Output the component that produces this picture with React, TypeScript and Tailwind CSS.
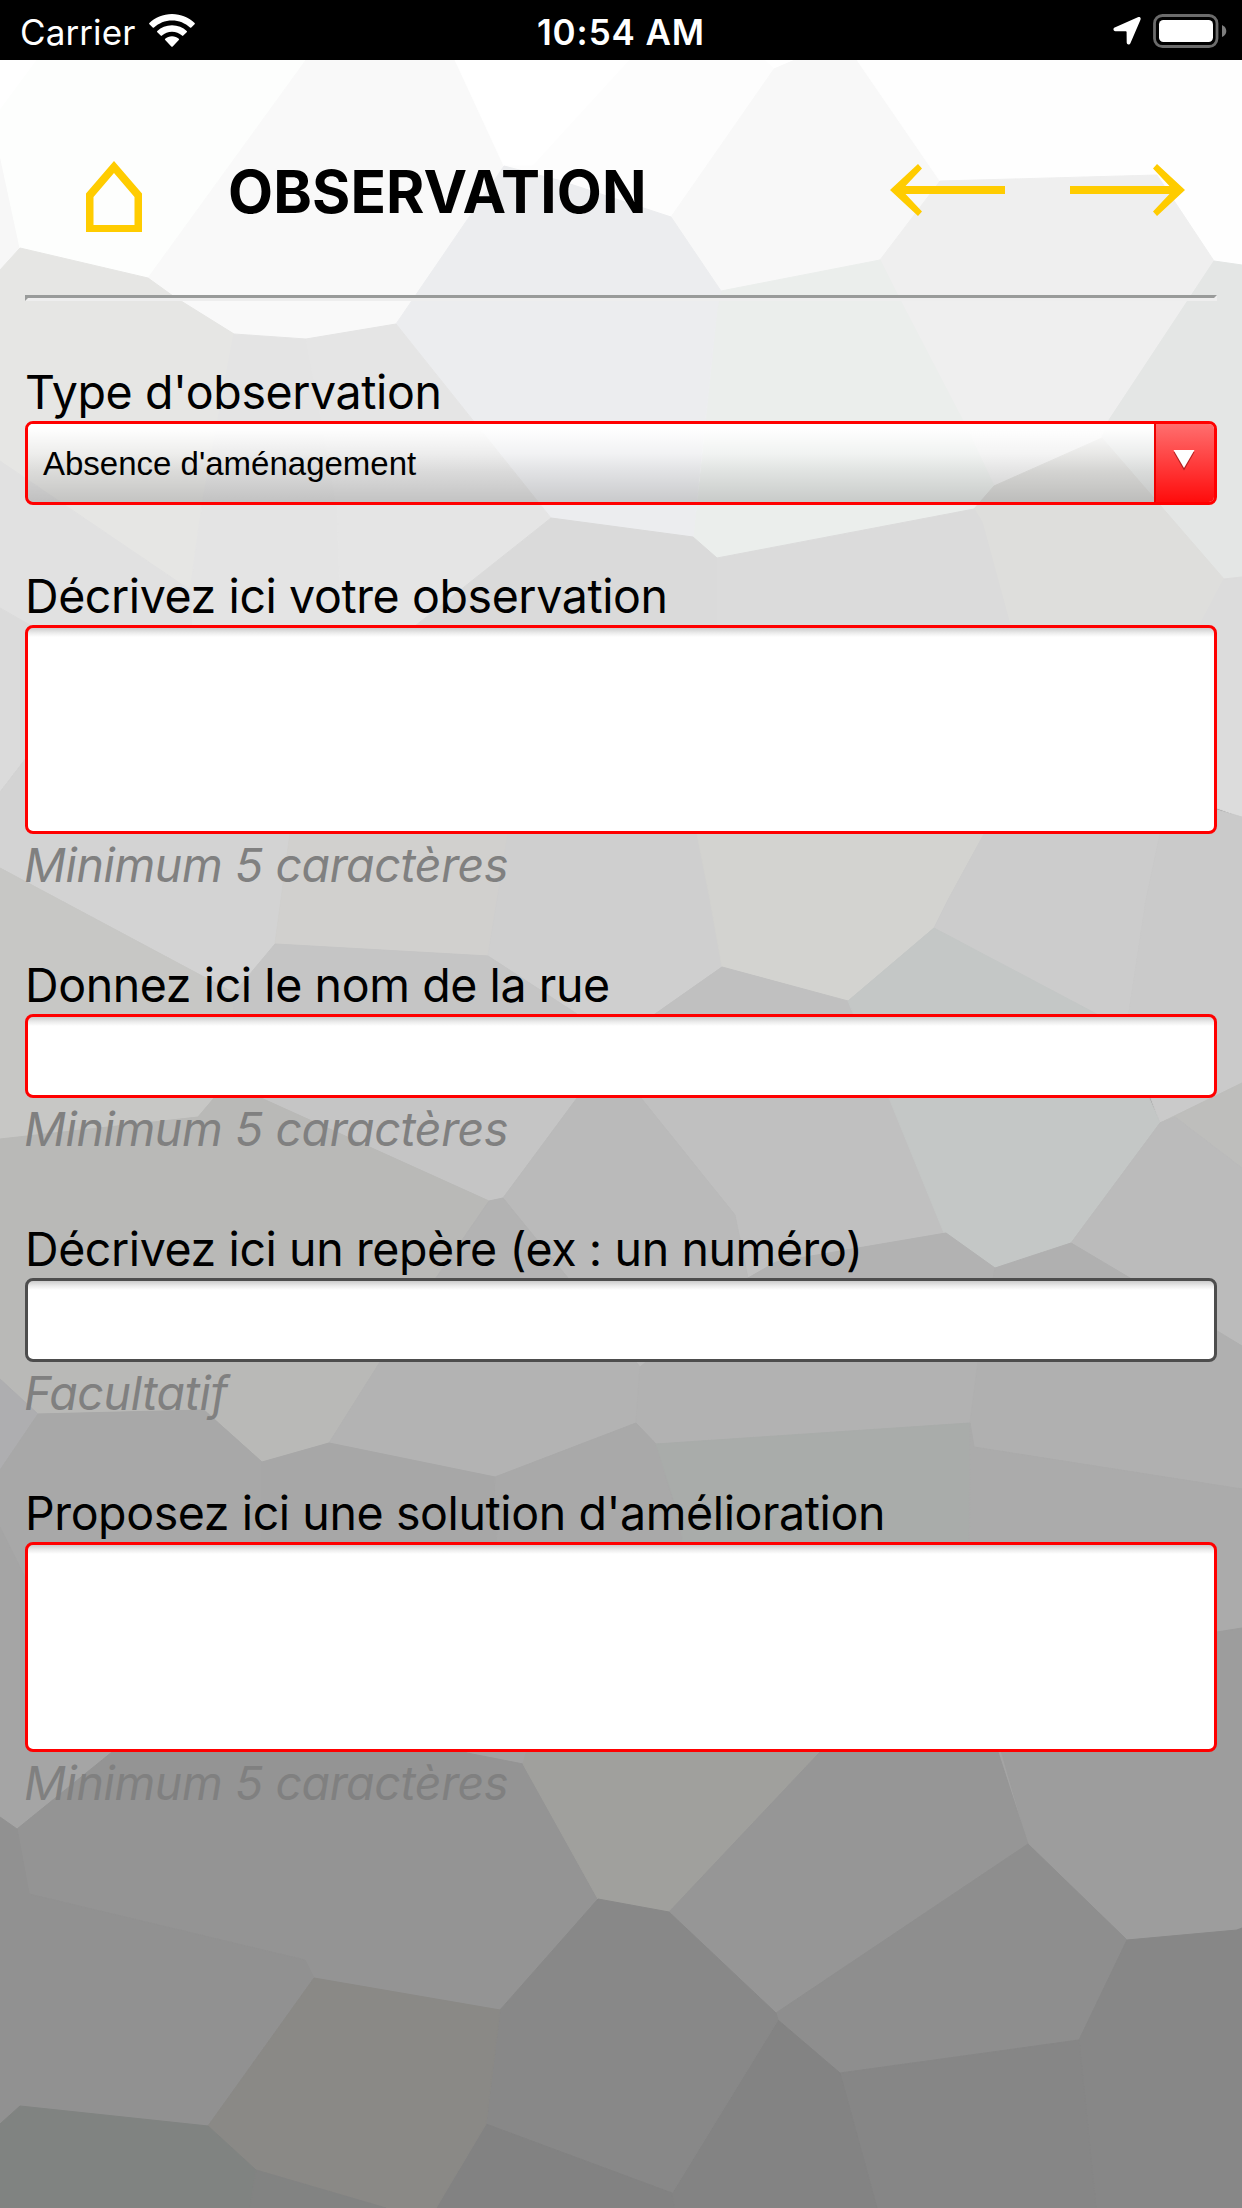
const CELLS: [string, string][] = [
  ["#ffffff", "0,60 37,60 0,110"],
  ["#f7f7f7", "0,155 20,248 0,270"],
  ["#fdfefd", "37,60 306,60 148,278 20,248 0,155 0,110"],
  ["#f9f9f9", "306,60 455,60 504,166 415,297 396,324 306,339 234,334 173,296 148,278"],
  ["#ffffff", "455,60 630,60 533,166 504,166"],
  ["#fdfdfd", "630,60 764,60 774,69 671,217 558,180 504,166 533,166"],
  ["#f8f8f8", "795,60 857,60 940,181 880,260 721,291 671,217 774,69"],
  ["#fefefe", "857,60 1242,60 1242,265 1214,261 1157,175 940,181"],
  ["#efefef", "940,181 1157,175 1214,261 1188,300 1109,420 1102,438 994,486 965,425 900,300 880,260"],
  ["#ebeeec", "721,291 880,260 900,300 965,425 994,486 974,509 717,558 693,537 700,480 717,310"],
  ["#ecedef", "504,166 558,180 671,217 721,291 717,310 693,537 551,518 396,324"],
  ["#e4e6e5", "1214,261 1242,265 1242,577 1224,579 1159,505 1102,438 1109,420"],
  ["#dededc", "1102,438 1224,579 1208,640 1014,640 982,522 974,509 994,486"],
  ["#e6e6e4", "0,270 20,248 148,278 173,296 234,334 202,505 190,590 0,461"],
  ["#e4e4e4", "234,334 306,339 337,507 342,660 193,660 190,590 202,505"],
  ["#e5e5e5", "306,339 396,324 551,518 415,626 400,660 342,660 337,507"],
  ["#e1e1e1", "0,461 190,590 193,660 60,660 30,625 0,608"],
  ["#dadada", "551,518 693,537 717,558 717,850 400,850 400,640 415,626"],
  ["#dbdbdb", "717,558 974,509 982,522 1014,640 1014,850 717,850"],
  ["#dcdcdc", "1224,579 1242,577 1242,817 1200,802 1200,625"],
  ["#dbdbdb", "0,608 30,625 40,740 0,792"],
  ["#d3d3d3", "0,792 40,740 290,740 290,834 275,944 249,977 234,993 0,868"],
  ["#d1d0ce", "290,800 508,800 508,834 488,956 275,944 290,834"],
  ["#cfcfcf", "508,800 697,800 697,834 710,900 722,967 655,1014 577,1014 488,956 508,834"],
  ["#d3d3d0", "697,800 984,800 984,834 948,900 934,928 848,1001 722,967 710,900 697,834"],
  ["#cccccc", "984,800 1160,800 1160,834 1146,900 1126,1030 1108,1030 934,928 948,900 984,834"],
  ["#cacaca", "1160,800 1217,810 1242,817 1242,1083 1160,1123 1126,1030 1146,900 1160,834"],
  ["#c7c7c5", "0,868 234,993 233,1050 214,1098 198,1117 0,1139"],
  ["#c5c5c5", "275,944 488,956 577,1014 600,1050 577,1098 503,1198 489,1201 261,1098 214,1098 233,1050 234,993"],
  ["#c0c0c0", "722,967 848,1001 889,1098 946,1233 776,1262 748,1278 735,1215 641,1098 600,1050 655,1014"],
  ["#bababa", "577,1098 600,1050 641,1098 735,1215 748,1278 640,1367 568,1278 503,1198"],
  ["#c4c7c6", "934,928 1108,1020 1149,1098 1160,1123 1071,1243 995,1268 944,1233 889,1098 848,1001"],
  ["#bebebc", "1160,1123 1242,1083 1242,1168 1175,1117"],
  ["#bbbbbb", "1160,1123 1175,1117 1242,1168 1242,1346 1217,1331 1071,1243"],
  ["#b9b9b7", "0,1139 198,1117 214,1098 261,1098 489,1201 436,1278 380,1362 329,1443 262,1462 204,1410 38,1414 0,1379"],
  ["#b3b3b3", "489,1201 503,1198 568,1278 640,1367 636,1423 495,1477 329,1443 380,1362 436,1278"],
  ["#b2b2b2", "640,1367 748,1278 776,1262 946,1233 995,1268 978,1362 970,1423 656,1444 636,1423"],
  ["#b0b0b0", "995,1268 1071,1243 1130,1278 1242,1346 1242,1489 974,1447 970,1423 978,1362"],
  ["#aeaeb0", "0,1379 38,1414 0,1470"],
  ["#a8a8a8", "38,1414 204,1410 262,1462 262,1760 112,1752 0,1527 0,1470"],
  ["#a7a7a7", "262,1462 329,1443 495,1477 505,1760 262,1760"],
  ["#a9a9a9", "495,1477 636,1423 656,1444 685,1542 685,1760 505,1760"],
  ["#a9acaa", "656,1444 970,1423 969,1560 685,1560 680,1520"],
  ["#ababab", "974,1447 1242,1489 1242,1628 1217,1632 969,1640 970,1423"],
  ["#9d9d9d", "1217,1632 1242,1628 1242,1928 1237,1930 1127,1940 1028,1844 998,1740 1190,1635"],
  ["#a5a5a5", "0,1527 112,1752 17,1829 0,1817"],
  ["#a2a2a2", "467,1740 530,1740 528,1756 523,1764 467,1753"],
  ["#949494", "112,1752 120,1740 450,1740 467,1753 523,1764 598,1899 500,2010 314,1978 305,1960 29,1894 17,1829"],
  ["#a0a09d", "530,1740 830,1740 820,1752 669,1912 598,1899 523,1764"],
  ["#969696", "830,1740 995,1740 998,1752 1028,1844 776,2013 669,1912 820,1752"],
  ["#8e8e8e", "1028,1844 1127,1940 1079,2040 840,2073 778,2020 776,2013"],
  ["#919191", "0,1817 17,1829 29,1894 305,1960 314,1978 208,2126 20,2106 0,2124"],
  ["#878787", "1127,1940 1237,1930 1242,1928 1242,2208 1096,2208 1079,2040"],
  ["#868686", "840,2073 1079,2040 1096,2208 877,2208"],
  ["#838383", "778,2020 840,2073 877,2208 674,2208 672,2193"],
  ["#888888", "598,1899 669,1912 776,2013 778,2020 672,2193 486,2124 500,2010"],
  ["#828282", "486,2124 672,2193 674,2208 436,2208"],
  ["#8a8986", "314,1978 500,2010 486,2124 436,2208 386,2208 256,2170 208,2126"],
  ["#808381", "0,2124 20,2106 208,2126 256,2170 250,2208 0,2208"],
  ["#828382", "256,2170 386,2208 250,2208"],
];

function Mosaic() {
  return (
    <svg className="absolute inset-0 -z-10" width="1242" height="2208" viewBox="0 0 1242 2208" aria-hidden="true">
      <rect width="1242" height="700" fill="#ffffff" />
      <rect y="700" width="1242" height="1508" fill="#a4a4a4" />
      {CELLS.map(([fill, points], i) => (
        <polygon key={i} points={points} fill={fill} stroke={fill} strokeWidth="1" strokeLinejoin="round" />
      ))}
    </svg>
  );
}

function StatusBar() {
  return (
    <div className="grid h-[60px] grid-cols-3 items-center bg-black pr-[15px] pl-5 text-white">
      <div className="flex items-center gap-[14px]">
        <span className="pt-[2px] text-[35px] leading-[60px] tracking-[0.1px]">Carrier</span>
        <svg width="46" height="34" viewBox="0 0 46 34" fill="#fff">
          <path d="M23 0C31.900 0 40 3.500 45.600 8.900Q46.200 9.500 45.600 10.200L42.300 13.500Q41.700 14.100 41 13.500C36.200 9 30 6.400 23 6.400S9.800 9 5 13.500Q4.300 14.100 3.700 13.500L.4 10.200Q-.2 9.500 .4 8.900C6 3.500 14.100 0 23 0Z" />
          <path d="M23 11.200C28.800 11.200 33.900 13.400 37.700 16.900Q38.400 17.500 37.700 18.200L34.300 21.600Q33.700 22.200 33 21.600C30.300 19.300 26.900 17.700 23 17.700S15.700 19.300 13 21.600Q12.300 22.200 11.700 21.600L8.300 18.200Q7.600 17.500 8.300 16.900C12.100 13.400 17.200 11.200 23 11.200Z" />
          <path d="M23 22.300C25.700 22.300 28 23.300 29.800 24.700Q30.500 25.300 29.800 26L23.700 32.500Q23 33.200 22.300 32.500L16.200 26Q15.500 25.300 16.200 24.700C18 23.300 20.300 22.300 23 22.300Z" />
        </svg>
      </div>
      <div className="pt-[2px] text-center text-[35px] leading-[60px] font-semibold tracking-[0.9px] whitespace-nowrap -ml-[5px]">
        10:54 AM
      </div>
      <div className="flex items-center justify-end gap-3">
        <svg width="28" height="28" viewBox="0 0 28 28" fill="#fff">
          <path d="M24.800.3C26.900-.6 28.300.8 27.400 2.900L17.400 26.300C16.600 28.200 13.700 27.900 13.700 25.600L13.600 15.100Q13.600 14.300 12.800 14.300L2.400 14.200C.1 14.200-.2 11.200 1.700 10.400Z" />
        </svg>
        <svg width="74" height="34" viewBox="0 0 74 34">
          <rect x="1.500" y="1.500" width="62.500" height="31" rx="8" fill="none" stroke="#6b6b6b" strokeWidth="2.800" />
          <rect x="6" y="6" width="54" height="22" rx="4.500" fill="#fff" />
          <path d="M69 11Q73.300 13 73.300 17T69 23Z" fill="#7d7d7d" />
        </svg>
      </div>
    </div>
  );
}

function HomeIcon() {
  return (
    <svg width="56" height="71" viewBox="0 0 56 71" fill="#ffcc00" fillRule="evenodd">
      <path d="M28 0L56 32.500V71H0V32.500ZM28 12L7.500 36V64H48.500V36Z" />
    </svg>
  );
}

function ArrowIcon({ flip = false }: { flip?: boolean }) {
  return (
    <svg className={flip ? "-scale-x-100" : ""} width="115" height="52" viewBox="0 0 115 52" fill="#ffcc00">
      <path d="M0 26L28 0L32 4.500L15.500 22H115V30H15.500L32 47.500L28 52Z" />
    </svg>
  );
}

function Label({ children }: { children: string }) {
  return <label className="block h-[57px] text-[46.5px] leading-[56px] tracking-[-0.4px] whitespace-nowrap">{children}</label>;
}

function Hint({ children }: { children: string }) {
  return (
    <p className="-ml-px h-[57px] text-[46.5px] leading-[62px] tracking-[-0.4px] whitespace-nowrap text-[#808080] italic">
      {children}
    </p>
  );
}

const BOX =
  "block w-full resize-none appearance-none rounded-[8px] border-[3px] bg-white bg-[linear-gradient(to_bottom,#cccccc_0px,#ececec_5px,#ffffff_9px)] outline-none";

export default function App() {
  return (
    <div className="relative isolate h-[2208px] w-[1242px] overflow-hidden font-['Inter',sans-serif] text-black">
      <Mosaic />
      <StatusBar />
      <header className="flex h-[235px] items-start pl-[86px]">
        <div className="w-[142px] pt-[101px]">
          <HomeIcon />
        </div>
        <h1 className="w-[662px] pt-[95px] text-[58.5px] leading-[73px] font-bold tracking-[0.1px]">OBSERVATION</h1>
        <div className="flex gap-[65px] pt-[104px]">
          <ArrowIcon />
          <ArrowIcon flip />
        </div>
      </header>
      <div className="mx-[25px] h-[6px] border-[3px] border-t-[#999b9a] border-r-[#eeeeee] border-b-[#eeeeee] border-l-[#999b9a]" />
      <main className="px-[25px] pt-[63px]">
        <section className="mb-[63px]">
          <Label>Type d'observation</Label>
          <div className="flex h-[84px] overflow-hidden rounded-[8px] border-[3px] border-[#ff0000]">
            <div className="flex-1 bg-[linear-gradient(to_bottom,#ffffff_5%,rgba(255,255,255,0.3)_38%,rgba(0,0,0,0.05)_62%,rgba(0,0,0,0.15)_100%)] pl-[15px] font-['Liberation_Sans',sans-serif] text-[33px] leading-[80px]">
              Absence d'aménagement
            </div>
            <div className="flex w-[60px] justify-center border-l-2 border-[#ee0000] bg-[linear-gradient(to_bottom,#ff6e6e,#ff0c0c)] pt-[26px]">
              <svg className="-ml-[3px]" width="22" height="22" viewBox="0 0 22 22">
                <path d="M0.500 2H21.500L11 20.500Z" fill="#b52020" />
                <path d="M0.500 0H21.500L11 18Z" fill="#fff" />
              </svg>
            </div>
          </div>
        </section>
        <section className="mb-[66px]">
          <Label>Décrivez ici votre observation</Label>
          <textarea className={`${BOX} h-[209px] border-[#ff0000]`} />
          <Hint>Minimum 5 caractères</Hint>
        </section>
        <section className="mb-[66px]">
          <Label>Donnez ici le nom de la rue</Label>
          <input className={`${BOX} h-[84px] border-[#ff0000]`} />
          <Hint>Minimum 5 caractères</Hint>
        </section>
        <section className="mb-[66px]">
          <Label>Décrivez ici un repère (ex : un numéro)</Label>
          <input className={`${BOX} h-[84px] border-[#4d4d4d]`} />
          <Hint>Facultatif</Hint>
        </section>
        <section>
          <Label>Proposez ici une solution d'amélioration</Label>
          <textarea className={`${BOX} h-[210px] border-[#ff0000]`} />
          <Hint>Minimum 5 caractères</Hint>
        </section>
      </main>
    </div>
  );
}
